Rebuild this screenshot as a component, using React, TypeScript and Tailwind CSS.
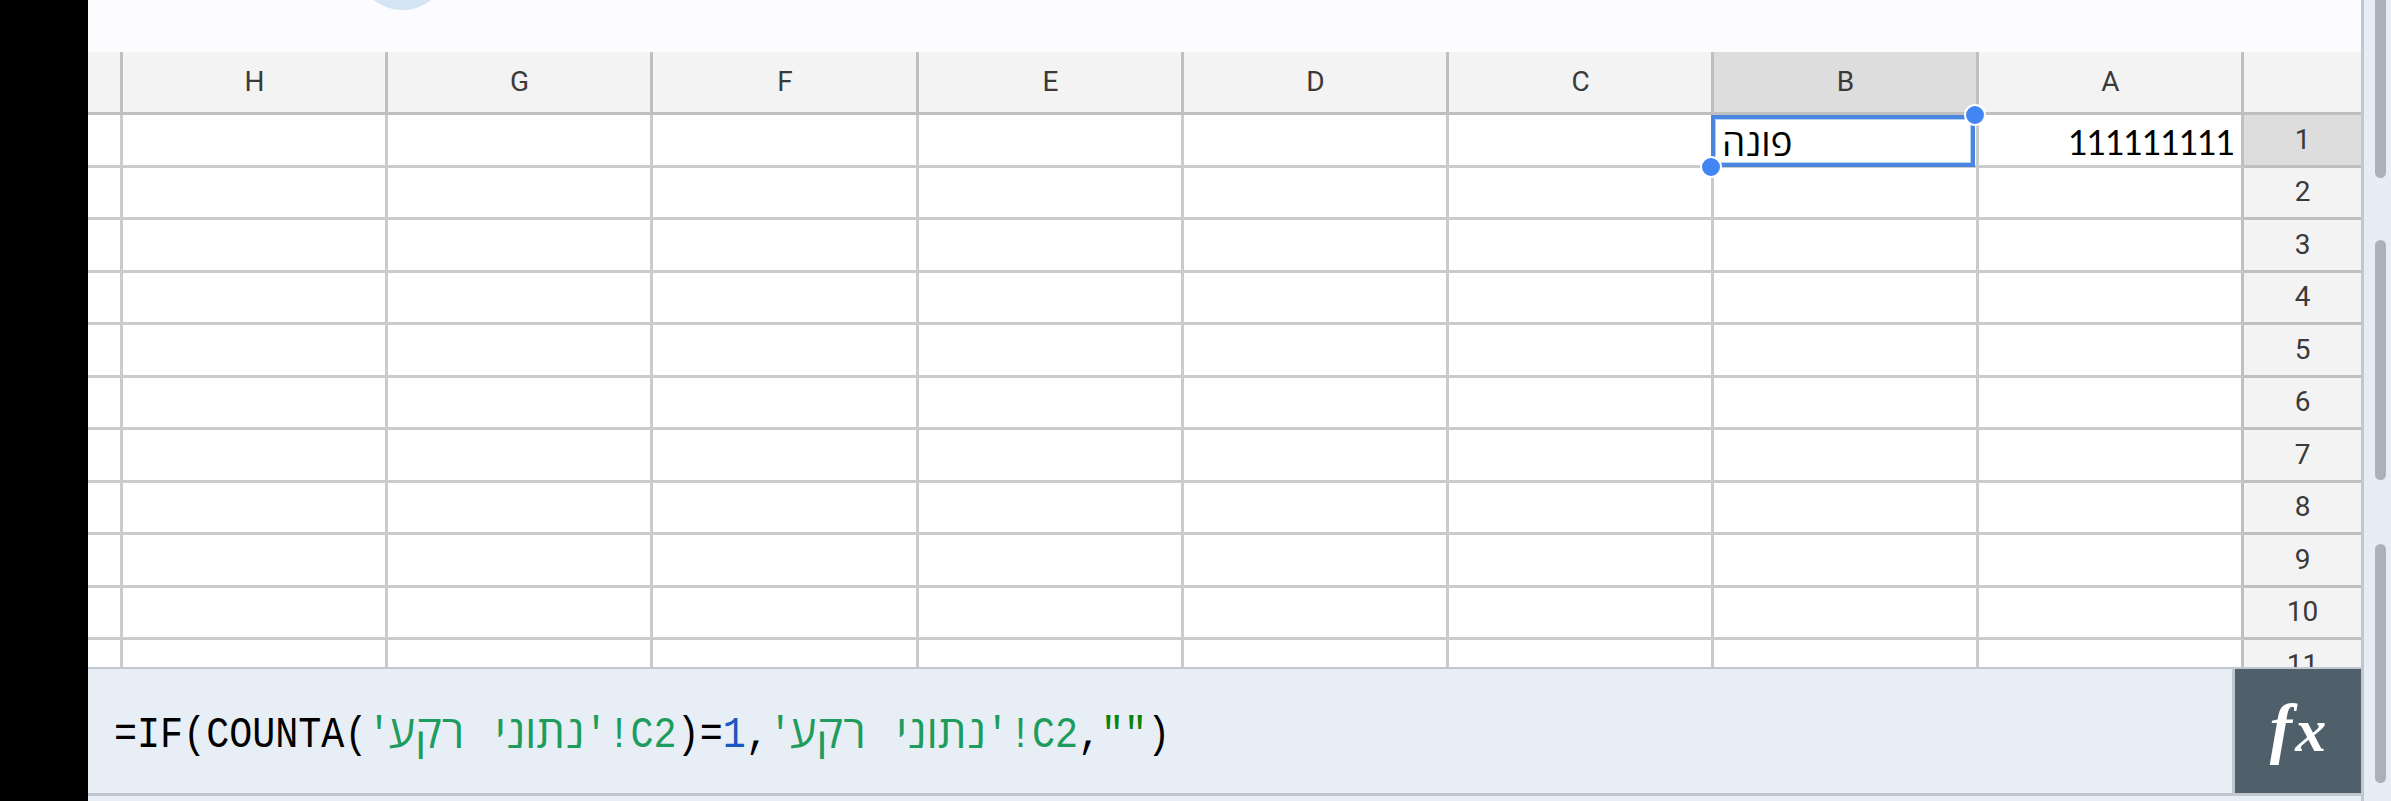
import type { ReactNode } from 'react';

const columns = ['H', 'G', 'F', 'E', 'D', 'C', 'B', 'A'];
const rows = [1, 2, 3, 4, 5, 6, 7, 8, 9, 10, 11];

const cellValues: Record<string, string> = {
  A1: '111111111',
  B1: 'פונה'
};

const SHEET_GRID =
  'grid grid-cols-[35px_265px_265px_266px_265px_265px_265px_265px_265px_117px]';

function ColumnHeader({ label, active }: { label: string; active?: boolean }) {
  return (
    <div
      className={`flex items-center justify-center border-r-[3px] border-b-[3px] border-[#bfbfbf] pl-[1px] ${
        active ? 'bg-[#dddddd]' : 'bg-[#f3f3f3]'
      }`}
    >
      {label}
    </div>
  );
}

function SelectionBox() {
  return (
    <div className="absolute -left-[3px] top-0 z-10 h-[52px] w-[264px] border-4 border-[#4a86e0] inset-ring inset-ring-[#b5d0f5]">
      <div className="absolute -right-[15px] -top-[15px] h-[22px] w-[22px] rounded-full border-2 border-white bg-[#4285f4]" />
      <div className="absolute -bottom-[15px] -left-[15px] h-[22px] w-[22px] rounded-full border-2 border-white bg-[#4285f4]" />
    </div>
  );
}

function SheetRow({ row }: { row: number }) {
  return (
    <div className={`${SHEET_GRID} ${row % 2 === 1 ? 'h-[53px]' : 'h-[52px]'} shrink-0`}>
      <div className="border-r-[3px] border-b-[3px] border-[#cbcbcb]" />
      {columns.map((column) => {
        const value = cellValues[`${column}${row}`];
        const selected = column === 'B' && row === 1;
        return (
          <div
            key={column}
            className={`flex items-center border-r-[3px] border-b-[3px] ${
              column === 'A'
                ? 'justify-end border-r-[#bfbfbf] border-b-[#cbcbcb] pr-[7px]'
                : 'border-[#cbcbcb] pl-[8px]'
            } ${selected ? 'relative' : ''}`}
          >
            {value && (
              <span
                className={
                  column === 'A'
                    ? "pt-[4px] font-['Lato',sans-serif] text-[34px] leading-none tracking-[-1.28px] text-black"
                    : "pt-[2px] font-['Open_Sans','Noto_Sans',sans-serif] text-[37px] leading-none text-black"
                }
              >
                {value}
              </span>
            )}
            {selected && <SelectionBox />}
          </div>
        );
      })}
      <div
        className={`flex items-center justify-center border-b-[3px] border-[#bfbfbf] pb-[1px] ${
          row === 1 ? 'bg-[#dddddd]' : 'bg-[#f3f3f3]'
        }`}
      >
        {row}
      </div>
    </div>
  );
}

function Code({ children }: { children: ReactNode }) {
  return <span className="inline-block scale-y-[1.15]">{children}</span>;
}

function SheetName() {
  return (
    <span className="text-[#1e9c5d]">
      <Code>'</Code>
      <span
        dir="rtl"
        className="inline-block w-[194px] translate-y-[2px] whitespace-nowrap text-center font-['Open_Sans','Noto_Sans',sans-serif] text-[45px] leading-none [word-spacing:19px]"
      >
        נתוני רקע
      </span>
      <Code>'!C2</Code>
    </span>
  );
}

function FormulaBar() {
  return (
    <div className="flex h-[129px] shrink-0 border-t-2 border-b-[3px] border-[#c0c7d0] bg-[#e7eef5]">
      <div
        dir="ltr"
        className="flex flex-1 items-center whitespace-pre border-r-[3px] border-[#c0c7d0] pl-[26px] font-['Liberation_Mono',monospace] text-[38.4px] leading-none text-black"
      >
        <div>
          <Code>=IF(COUNTA(</Code>
          <SheetName />
          <Code>
            )=<span className="text-[#1a57c0]">1</span>,
          </Code>
          <SheetName />
          <Code>
            ,<span className="text-[#0a820a]">""</span>)
          </Code>
        </div>
      </div>
      <button className="flex w-[126px] items-baseline justify-center bg-[#4f606b] pt-[26px] font-['Liberation_Serif',serif] font-bold italic leading-none text-white">
        <span className="text-[67px] leading-none">f</span>
        <span className="pl-[3px] text-[62px] leading-none">x</span>
      </button>
    </div>
  );
}

function ScrollRail() {
  return (
    <div className="flex h-full w-[30px] flex-col items-center border-l-[3px] border-[#c0c7d1] bg-[#e6edf5] pr-[5px] pl-[11px]">
      <div className="h-[178px] w-[11px] rounded-b-full bg-[#abb0b9]" />
      <div className="mt-[62px] h-[240px] w-[11px] rounded-full bg-[#abb0b9]" />
      <div className="mt-[64px] h-[239px] w-[11px] rounded-full bg-[#abb0b9]" />
    </div>
  );
}

export default function App() {
  return (
    <div className="flex h-[801px] w-[2391px] overflow-hidden bg-[#e7eef5] font-['Roboto',sans-serif] text-[28px] leading-none text-[#3a3a3a]">
      <div className="w-[88px] shrink-0 bg-black" />
      <div className="flex w-[2273px] shrink-0 flex-col">
        {/* Toolbar */}
        <div className="relative h-[52px] shrink-0 overflow-hidden bg-[#fcfcff]">
          <div className="absolute -top-[83px] left-[268px] h-[93px] w-[93px] rounded-full bg-[#d3e5f3]" />
        </div>

        {/* Sheet */}
        <div className="flex h-[615px] shrink-0 flex-col overflow-hidden bg-white">
          <div className={`${SHEET_GRID} h-[63px] shrink-0`}>
            <ColumnHeader label="" />
            {columns.map((column) => (
              <ColumnHeader key={column} label={column} active={column === 'B'} />
            ))}
            <div className="border-b-[3px] border-[#bfbfbf] bg-[#f3f3f3]" />
          </div>
          {rows.map((row) => (
            <SheetRow key={row} row={row} />
          ))}
        </div>

        <FormulaBar />
      </div>
      <ScrollRail />
    </div>
  );
}
